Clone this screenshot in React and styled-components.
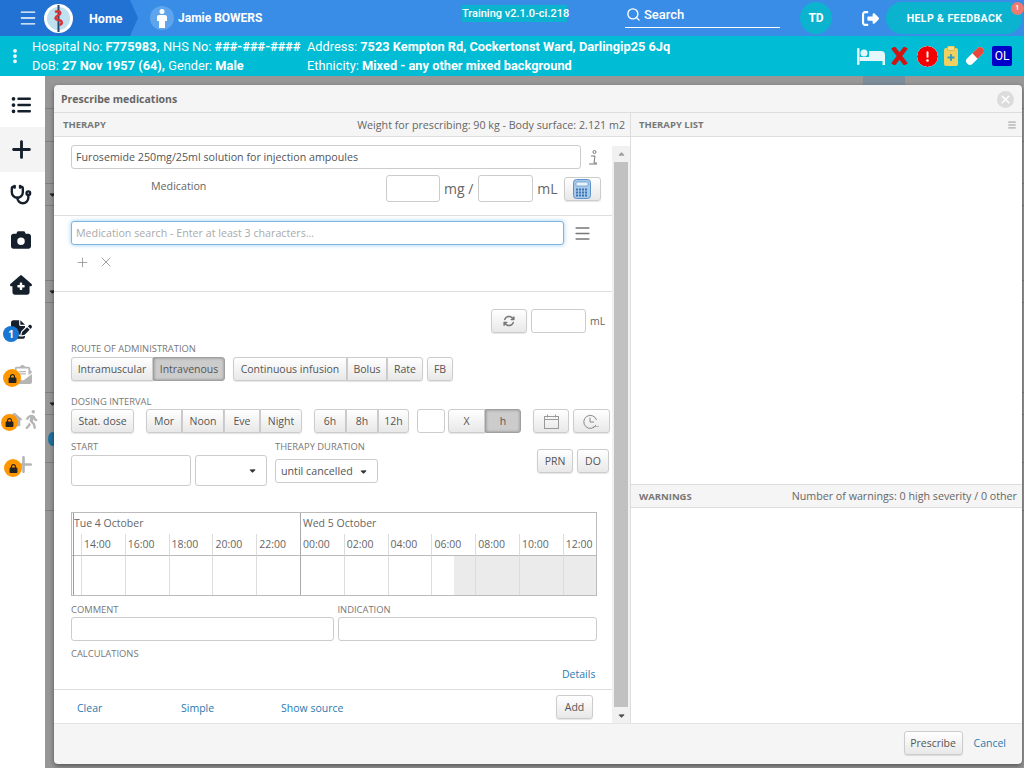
import React from 'react';
import styled, { createGlobalStyle } from 'styled-components';
import {
  FaListUl, FaPlus, FaCamera, FaHouseMedical, FaFileSignature, FaEnvelopeOpenText, FaLock, FaHouse, FaPersonWalking,
  FaCircleExclamation, FaArrowsRotate, FaRightFromBracket, FaCaretDown, FaCaretUp,
} from 'react-icons/fa6';
import { Stethoscope, Search, Menu, Plus, X, EllipsisVertical } from 'lucide-react';

const GlobalStyle = createGlobalStyle`
  html, body { margin: 0; height: 100%; overflow: hidden; }
  * { box-sizing: border-box; }
  body { font-family: "Open Sans", sans-serif; color: #555; }
`;

const Page = styled.div`
  position: relative;
  display: flex;
  flex-direction: column;
  width: 1024px;
  height: 768px;
  overflow: hidden;
`;

/* top bar */
const TopBar = styled.header`
  display: flex;
  align-items: center;
  height: 36px;
  background: #3a8de6;
  color: #fff;
  font-family: Roboto, sans-serif;
`;

const HomeCrumb = styled.div`
  display: flex;
  align-items: center;
  width: 138px;
  height: 36px;
  padding-left: 18px;
  background: #2272d3;
  clip-path: polygon(0 0, 130px 0, 138px 18px, 130px 36px, 0 36px);
`;

const MenuIcon = styled(Menu)`
  width: 20px;
  height: 20px;
  margin-right: 6px;
  stroke-width: 1.6;
`;

const Logo = styled.svg`
  width: 29px;
  height: 29px;
  flex: none;
`;

const CrumbText = styled.span`
  margin-left: 16px;
  font-size: 12.5px;
  font-weight: 700;
`;

const Avatar = styled.div`
  display: flex;
  align-items: center;
  justify-content: center;
  width: 24px;
  height: 24px;
  margin-left: 12px;
  border-radius: 50%;
  background: #5ea5ee;
`;

const PatientName = styled.span`
  margin-left: 4px;
  width: 284px;
  font-size: 12px;
  font-weight: 700;
`;

const TrainingBadge = styled.div`
  align-self: flex-start;
  width: 105px;
  height: 17px;
  margin-top: 5px;
  background: #0cb3cf;
  font-size: 11px;
  font-weight: 500;
  line-height: 17px;
  text-align: center;
  white-space: nowrap;
`;

const SearchBox = styled.div`
  align-self: flex-start;
  display: flex;
  align-items: center;
  gap: 3px;
  width: 155px;
  height: 24px;
  margin: 4px 0 0 58px;
  padding: 0 0 3px 1px;
  border-bottom: 1px solid #fff;
  font-size: 13px;
  font-weight: 500;
`;

const Initials = styled.div`
  display: flex;
  align-items: center;
  justify-content: center;
  width: 32px;
  height: 32px;
  margin-left: 20px;
  border-radius: 50%;
  background: #0cb3cf;
  font-size: 12px;
  font-weight: 700;
`;

const LogoutIcon = styled(FaRightFromBracket)`
  width: 19px;
  height: 17px;
  margin-left: 29px;
`;

const HelpButton = styled.div`
  position: relative;
  display: flex;
  align-items: center;
  justify-content: center;
  width: 136px;
  height: 32px;
  margin-left: 6px;
  padding-left: 1px;
  border-radius: 16px;
  background: #0cb3cf;
  font-size: 10.5px;
  font-weight: 700;
  letter-spacing: 0.4px;
`;

const HelpCount = styled.span`
  position: absolute;
  top: 0;
  right: -2px;
  width: 13px;
  height: 13px;
  border-radius: 50%;
  background: #ef7a72;
  font-size: 7px;
  line-height: 13px;
  text-align: center;
`;

/* patient banner */
const PatientBar = styled.div`
  display: flex;
  align-items: center;
  height: 40px;
  background: #00bcd4;
  color: #fff;
  font-family: Roboto, sans-serif;
`;

const MoreIcon = styled(EllipsisVertical)`
  width: 18px;
  height: 18px;
  margin: 0 8px 0 6px;
  stroke-width: 3;
`;

const PatientCol = styled.div`
  display: flex;
  flex-direction: column;
  width: ${({ $w }) => $w}px;
  font-size: 12.8px;
  line-height: 19px;
  white-space: nowrap;
  b { font-weight: 700; }
`;

const StatusIcons = styled.div`
  display: flex;
  align-items: center;
  gap: 6.4px;
  margin-left: auto;
  padding-right: 12px;
`;

const OlBadge = styled.div`
  width: 20px;
  height: 20px;
  margin-left: 1px;
  border-radius: 2px;
  background: #0000c8;
  font-size: 12px;
  line-height: 20px;
  text-align: center;
`;

const AlertIcon = styled(FaCircleExclamation)`
  width: 21px;
  height: 21px;
  margin-left: 2px;
  color: #f40000;
  background: #fff;
  border-radius: 50%;
`;

/* page under the dialog */
const Main = styled.div`
  display: flex;
  flex: 1;
  min-height: 0;
`;

const SideNav = styled.nav`
  display: flex;
  flex-direction: column;
  flex: none;
  width: 45px;
  padding-top: 6px;
  background: #fff;
`;

const NavItem = styled.div`
  position: relative;
  display: flex;
  align-items: center;
  justify-content: center;
  height: 45px;
  padding-right: 3px;
  background: ${({ $active }) => ($active ? '#f4f4f4' : 'transparent')};
  color: ${({ $locked }) => ($locked ? '#b5b5b5' : '#16202c')};
  font-size: 20px;
`;

const ShiftedIcon = styled.span`
  display: flex;
  align-items: center;
  margin-left: ${({ $ml }) => $ml}px;
`;

const NavBadge = styled.span`
  position: absolute;
  left: ${({ $left }) => $left}px;
  top: ${({ $top }) => $top}px;
  display: flex;
  align-items: center;
  justify-content: center;
  width: ${({ $size }) => $size}px;
  height: ${({ $size }) => $size}px;
  border-radius: 50%;
  background: ${({ $bg }) => $bg};
  color: ${({ $fg }) => $fg};
  font-size: 10px;
  font-weight: 700;
`;

const Backdrop = styled.div`
  display: flex;
  flex-direction: column;
  flex: 1;
  background: #979797;
`;

const BackRow = styled.div`
  display: flex;
  align-items: center;
  height: ${({ $h }) => $h}px;
  padding-left: 3px;
  border-bottom: 1px solid #7e7e7e;
  color: #222;
  font-size: 9px;
`;

const BackTab = styled.div`
  width: 42px;
  height: 9px;
  margin-left: 815px;
  align-self: flex-start;
  background: #7d8d99;
`;

const BackMark = styled.span`
  display: block;
  width: 9px;
  height: 14px;
  border-radius: 50%;
  background: #1f6f9e;
`;

/* dialog */
const Dialog = styled.section`
  position: absolute;
  left: 54px;
  top: 85px;
  display: flex;
  flex-direction: column;
  width: 968px;
  height: 679px;
  border-radius: 4px;
  background: #f5f5f5;
  box-shadow: 0 2px 5px rgba(0, 0, 0, 0.45);
`;

const DialogTitle = styled.div`
  display: flex;
  align-items: center;
  justify-content: space-between;
  flex: none;
  height: 27px;
  padding: 1px 8px 0 7px;
  font-size: 10.5px;
  font-weight: 700;
  color: #666;
`;

const CloseDot = styled.div`
  display: flex;
  align-items: center;
  justify-content: center;
  width: 17px;
  height: 17px;
  border-radius: 50%;
  background: #dcdcdc;
  color: #fff;
`;

const DialogBody = styled.div`
  display: flex;
  flex: none;
  height: 611px;
`;

const LeftPane = styled.div`
  display: flex;
  flex-direction: column;
  flex: none;
  width: 577px;
  border-right: 1px solid #ddd;
  background: #fff;
`;

const RightPane = styled.div`
  display: flex;
  flex-direction: column;
  flex: 1;
  background: #fff;
`;

const PaneHead = styled.div`
  display: flex;
  align-items: center;
  justify-content: space-between;
  flex: none;
  height: ${({ $h }) => $h || 25}px;
  padding: 0 5px 0 ${({ $pl }) => $pl || 9}px;
  border-top: 1px solid #ddd;
  border-bottom: 1px solid #ddd;
  background: #f5f5f5;
  font-size: 10.7px;
  color: #666;
  b { font-size: 9.5px; color: #777; }
`;

const PaneSpacer = styled.div`
  flex: ${({ $grow }) => ($grow ? 1 : 'none')};
  height: ${({ $h }) => ($h ? `${$h}px` : 'auto')};
`;

const PaneSplit = styled.div`
  display: flex;
  flex: 1;
  min-height: 0;
`;

const FormCol = styled.div`
  display: flex;
  flex-direction: column;
  width: 558px;
`;

const Scrollbar = styled.div`
  display: flex;
  flex-direction: column;
  align-items: center;
  width: 18px;
  margin-top: 9px;
  background: #f1f1f1;
  font-size: 9px;
`;

const ScrollEnd = styled.div`
  display: flex;
  align-items: center;
  justify-content: center;
  flex: none;
  height: 16px;
  color: ${({ $up }) => ($up ? '#a0a0a0' : '#505050')};
`;

const ScrollThumb = styled.div`
  flex: 1;
  width: 14px;
  background: #c1c1c1;
`;

const FormBlock = styled.div`
  display: flex;
  flex-direction: column;
  height: ${({ $h }) => $h}px;
  padding: ${({ $pt }) => $pt}px 0 0 17px;
  border-bottom: 1px solid #ddd;
`;

const Row = styled.div`
  display: flex;
  align-items: ${({ $align }) => $align || 'center'};
  gap: ${({ $gap }) => $gap || 0}px;
  margin-top: ${({ $mt }) => $mt || 0}px;
  padding-left: ${({ $pl }) => $pl || 0}px;
`;

const Label = styled.div`
  margin-top: ${({ $mt }) => $mt || 0}px;
  margin-left: ${({ $ml }) => $ml || 0}px;
  height: ${({ $h }) => $h || 14}px;
  font-size: 9.4px;
  line-height: ${({ $lh }) => $lh || 14}px;
  color: #777;
  white-space: nowrap;
`;

const TextBox = styled.div`
  flex: none;
  display: flex;
  align-items: center;
  width: ${({ $w }) => $w}px;
  height: ${({ $h }) => $h || 24}px;
  margin-left: ${({ $ml }) => $ml || 0}px;
  padding: 0 4px;
  border: 1px solid #ccc;
  border-radius: 3px;
  background: #fff;
  color: #555;
  font-size: 10.7px;
  white-space: nowrap;
  overflow: hidden;
`;

const FocusBox = styled(TextBox)`
  border-color: #7fb6df;
  box-shadow: 0 0 4px rgba(82, 168, 236, 0.6);
  color: #aaa;
`;

const SelectBox = styled(TextBox)`
  justify-content: space-between;
  padding: 0 9px 0 5px;
  color: #555;
`;

const Unit = styled.span`
  color: #666;
  font-size: ${({ $size }) => $size || 14}px;
  margin-left: ${({ $ml }) => $ml || 0}px;
  white-space: nowrap;
`;

const Btn = styled.div`
  flex: none;
  display: flex;
  align-items: center;
  justify-content: center;
  width: ${({ $w }) => $w}px;
  height: 24px;
  margin-left: ${({ $ml }) => $ml || 0}px;
  margin-top: ${({ $mt }) => $mt || 0}px;
  border: 1px solid ${({ $on }) => ($on ? '#a0a0a0' : '#ccc')};
  border-radius: 3px;
  background: ${({ $on }) => ($on ? '#ccc' : 'linear-gradient(#fff, #e8e8e8)')};
  box-shadow: ${({ $on }) => ($on ? 'inset 0 0 3px rgba(0, 0, 0, 0.35)' : '0 1px 1px rgba(0, 0, 0, 0.1)')};
  color: #555;
  font-size: 10.5px;
  white-space: nowrap;
`;

const BtnGroup = styled.div`
  display: flex;
  flex: none;
  margin-left: ${({ $ml }) => $ml || 0}px;
  ${Btn} { border-radius: 0; }
  ${Btn}:first-child { border-radius: 3px 0 0 3px; }
  ${Btn}:last-child { border-radius: 0 3px 3px 0; }
`;

const MedicationCaption = styled.span`
  width: 315px;
  padding: 0 0 6px 80px;
  font-size: 10.7px;
  color: #666;
`;

const InfoMark = styled.svg`
  width: 10px;
  height: 15px;
  margin-left: 7px;
`;

const SearchMenu = styled(Menu)`
  width: 19px;
  height: 19px;
  margin-left: 9px;
  color: #777;
  stroke-width: 2;
`;

const SmallIcons = styled.div`
  display: flex;
  align-items: center;
  gap: 8.5px;
  margin: 9px 0 0 3.5px;
  color: #888;
`;

/* timeline */
const Timeline = styled.div`
  position: relative;
  display: grid;
  grid-template-columns: 9px repeat(11, 43.8px) 1fr;
  grid-template-rows: 21px 22px 39px;
  width: 526px;
  height: 84px;
  border: 1px solid #bbb;
  font-size: 10.5px;
  color: #666;
`;

const NowLine = styled.span`
  position: absolute;
  left: 1px;
  top: 0;
  bottom: 0;
  width: 1px;
  background: #d9867c;
`;

const DayCell = styled.div`
  grid-column: ${({ $col }) => $col};
  padding: 3px 0 0 2px;
  border-left: ${({ $sep }) => ($sep ? '1px solid #aaa' : '0')};
  white-space: nowrap;
`;

const HourCell = styled.div`
  padding: 3px 0 0 2px;
  border-left: 1px solid ${({ $major }) => ($major ? '#aaa' : '#ddd')};
  border-bottom: 1px solid #bbb;
`;

const HourGap = styled.div`
  border-bottom: 1px solid #bbb;
`;

const SlotCell = styled.div`
  border-left: 1px solid ${({ $major }) => ($major ? '#aaa' : '#ddd')};
  background: ${({ $shade }) =>
    $shade === 'full' ? '#ebebeb' : $shade === 'half' ? 'linear-gradient(90deg, #fff 50%, #ebebeb 50%)' : '#fff'};
`;

const TextLink = styled.span`
  color: #2a7ab0;
  font-size: 10.5px;
  white-space: nowrap;
`;

const FormFooter = styled.div`
  display: flex;
  align-items: center;
  flex: none;
  height: 33px;
  padding: 1px 19px 0 23px;
`;

const FooterLink = styled(TextLink)`
  width: ${({ $w }) => $w}px;
  flex: none;
  padding-top: 2px;
`;

const DialogFooter = styled.div`
  display: flex;
  align-items: center;
  justify-content: flex-end;
  gap: 11px;
  flex: 1;
  padding: 0 16px 2px 0;
  border-top: 1px solid #e4e4e4;
`;

const hours = ['14:00', '16:00', '18:00', '20:00', '22:00', '00:00', '02:00', '04:00', '06:00', '08:00', '10:00', '12:00'];

const Calculator = () => (
  <svg width="18" height="20" viewBox="0 0 18 20">
    <rect x=".5" y=".5" width="17" height="19" rx="3" fill="#a9c9ea" stroke="#5c93cc" />
    <rect x="3" y="3" width="12" height="4" rx="1" fill="#e8f2fb" stroke="#5c93cc" strokeWidth=".7" />
    {[9.5, 12.5, 15.5].map(y =>
      [3, 6, 9, 12].map(x => <rect key={`${x}-${y}`} x={x} y={y} width="2" height="2" fill="#3a74b0" />)
    )}
  </svg>
);

const CalendarIcon = () => (
  <svg width="15" height="15" viewBox="0 0 15 15" fill="none" stroke="#999">
    <rect x=".5" y="2.500" width="14" height="12" />
    <path d="M.5 5.500h14M3.500 .5v3M11.500 .5v3" />
  </svg>
);

const ClockIcon = () => (
  <svg width="17" height="15" viewBox="0 0 17 15" fill="none" stroke="#888">
    <path d="M13 11A6.500 6.500 0 1 1 13.500 6" />
    <path d="M7 3.500V8h4" />
    <path d="M10.500 12.500h1M12.500 12.500h1M14.500 12.500h1" />
  </svg>
);

const BedGlyph = () => (
  <svg width="28" height="17" viewBox="0 0 28 17" fill="#e4f7fa">
    <rect x="0" y="0" width="2.500" height="17" rx="1" />
    <circle cx="7" cy="5" r="3.500" />
    <path d="M12 3h12a4 4 0 0 1 4 4v10h-2.500v-4h-23V9H12z" />
  </svg>
);

const BoldX = () => (
  <svg width="17" height="18" viewBox="0 0 17 18" stroke="#d01414" strokeWidth="4.500">
    <path d="M2 0.500L15 17.500M15 0.500L2 17.500" />
  </svg>
);

const Clipboard = () => (
  <svg width="14" height="20" viewBox="0 0 14 20">
    <rect x="0" y="2" width="14" height="18" rx="2" fill="#f0d060" />
    <rect x="3.500" y="0" width="7" height="4.500" rx="1" fill="#f6e08d" stroke="#c9a531" strokeWidth=".6" />
    <path d="M7 8v7M3.500 11.500h7" stroke="#2b9fc7" strokeWidth="1.800" />
  </svg>
);

const Pill = () => (
  <svg width="20" height="20" viewBox="0 0 21 21">
    <g transform="rotate(-45 10.500 10.500)">
      <rect x="-1" y="6.500" width="23" height="8" rx="4" fill="#fff" />
      <path d="M10.500 6.500h7.500a4 4 0 0 1 0 8h-7.500z" fill="#e8473c" />
    </g>
  </svg>
);

export default function App() {
  return (
    <Page>
      <GlobalStyle />
      <TopBar>
        <HomeCrumb>
          <MenuIcon />
          <Logo viewBox="0 0 29 29">
            <circle cx="14.500" cy="14.500" r="14.500" fill="#fff" />
            <circle cx="14.500" cy="14.500" r="11.500" fill="#bfe0ef" />
            <path d="M14.500 1v27" stroke="#29476f" strokeWidth="2" />
            <path d="M11 8c5-2 7 1 3.500 3S10 15 14.500 16s4 4 1 5" fill="none" stroke="#d8343a" strokeWidth="2.500" />
          </Logo>
          <CrumbText>Home</CrumbText>
        </HomeCrumb>
        <Avatar>
          <svg width="10" height="19" viewBox="0 0 10 19" fill="#fff">
            <circle cx="5" cy="2.500" r="2.500" />
            <path d="M2 6h6a2 2 0 0 1 2 2v4H8v7H2v-7H0V8a2 2 0 0 1 2-2z" />
          </svg>
        </Avatar>
        <PatientName>Jamie BOWERS</PatientName>
        <TrainingBadge>Training v2.1.0-ci.218</TrainingBadge>
        <SearchBox>
          <Search size={15} strokeWidth={2.2} />
          Search
        </SearchBox>
        <Initials>TD</Initials>
        <LogoutIcon />
        <HelpButton>
          HELP &amp; FEEDBACK
          <HelpCount>1</HelpCount>
        </HelpButton>
      </TopBar>

      <PatientBar>
        <MoreIcon />
        <PatientCol $w={275}>
          <span>Hospital No: <b>F775983,</b> NHS No: <b>###-###-####</b></span>
          <span>DoB: <b>27 Nov 1957 (64),</b> Gender: <b>Male</b></span>
        </PatientCol>
        <PatientCol $w={400}>
          <span>Address: <b>7523 Kempton Rd, Cockertonst Ward, Darlingip25 6Jq</b></span>
          <span>Ethnicity: <b>Mixed - any other mixed background</b></span>
        </PatientCol>
        <StatusIcons>
          <BedGlyph />
          <BoldX />
          <AlertIcon />
          <Clipboard />
          <Pill />
          <OlBadge>OL</OlBadge>
        </StatusIcons>
      </PatientBar>

      <Main>
        <SideNav>
          <NavItem><FaListUl /></NavItem>
          <NavItem $active><FaPlus size={23} /></NavItem>
          <NavItem><Stethoscope size={22} strokeWidth={2.6} /></NavItem>
          <NavItem><FaCamera /></NavItem>
          <NavItem><FaHouseMedical size={22} /></NavItem>
          <NavItem>
            <FaFileSignature size={21} />
            <NavBadge $left={3} $top={19} $size={16} $bg="#1976d2" $fg="#fff">1</NavBadge>
          </NavItem>
          <NavItem $locked>
            <ShiftedIcon $ml={3}><FaEnvelopeOpenText size={19} /></ShiftedIcon>
            <NavBadge $left={3} $top={17} $size={18} $bg="#ff9800" $fg="#222"><FaLock size={9} /></NavBadge>
          </NavItem>
          <NavItem $locked>
            <ShiftedIcon $ml={6}><FaHouse size={15} /></ShiftedIcon>
            <FaPersonWalking size={19} />
            <NavBadge $left={1} $top={17} $size={17} $bg="#ff9800" $fg="#222"><FaLock size={9} /></NavBadge>
          </NavItem>
          <NavItem $locked>
            <ShiftedIcon $ml={5}><FaPlus size={21} /></ShiftedIcon>
            <NavBadge $left={4} $top={17} $size={18} $bg="#ff9800" $fg="#222"><FaLock size={9} /></NavBadge>
          </NavItem>
        </SideNav>
        <Backdrop>
          <BackRow $h={33}><BackTab /></BackRow>
          <BackRow $h={33} />
          <BackRow $h={42} />
          <BackRow $h={22}><FaCaretDown /></BackRow>
          <BackRow $h={75} />
          <BackRow $h={22}><FaCaretDown /></BackRow>
          <BackRow $h={90} />
          <BackRow $h={22}><FaCaretDown /></BackRow>
          <BackRow $h={48}><BackMark /></BackRow>
          <BackRow $h={48} />
        </Backdrop>
      </Main>

      <Dialog>
        <DialogTitle>
          Prescribe medications
          <CloseDot><X size={13} strokeWidth={3} /></CloseDot>
        </DialogTitle>
        <DialogBody>
          <LeftPane>
            <PaneHead>
              <b>THERAPY</b>
              <span>Weight for prescribing: 90 kg - Body surface: 2.121 m2</span>
            </PaneHead>
            <PaneSplit>
              <FormCol>
                <FormBlock $h={79} $pt={8}>
                  <Row>
                    <TextBox $w={510}>Furosemide 250mg/25ml solution for injection ampoules</TextBox>
                    <InfoMark viewBox="0 0 10 15" fill="none" stroke="#777">
                      <circle cx="6.500" cy="2" r="1.500" />
                      <path d="M3 6h4l-1 7h3M1 14h8" />
                    </InfoMark>
                  </Row>
                  <Row $mt={6}>
                    <MedicationCaption>Medication</MedicationCaption>
                    <TextBox $w={54} $h={27} />
                    <Unit $ml={4}>mg /</Unit>
                    <TextBox $w={55} $h={27} $ml={5} />
                    <Unit $ml={4}>mL</Unit>
                    <Btn $w={37} $ml={6}><Calculator /></Btn>
                  </Row>
                </FormBlock>
                <FormBlock $h={76} $pt={5}>
                  <Row>
                    <FocusBox $w={493}>Medication search - Enter at least 3 characters...</FocusBox>
                    <SearchMenu />
                  </Row>
                  <SmallIcons>
                    <Plus size={15} strokeWidth={1.2} />
                    <X size={16} strokeWidth={1.2} />
                  </SmallIcons>
                </FormBlock>
                <FormBlock $h={398} $pt={17}>
                  <Row $pl={420}>
                    <Btn $w={36}><FaArrowsRotate size={12} color="#777" /></Btn>
                    <TextBox $w={55} $ml={4} />
                    <Unit $size={10.5} $ml={4}>mL</Unit>
                  </Row>
                  <Label $mt={9} $h={15}>ROUTE OF ADMINISTRATION</Label>
                  <Row>
                    <BtnGroup>
                      <Btn $w={82}>Intramuscular</Btn>
                      <Btn $w={72} $on>Intravenous</Btn>
                    </BtnGroup>
                    <BtnGroup $ml={8}>
                      <Btn $w={114}>Continuous infusion</Btn>
                      <Btn $w={40}>Bolus</Btn>
                      <Btn $w={36}>Rate</Btn>
                    </BtnGroup>
                    <Btn $w={26} $ml={4}>FB</Btn>
                  </Row>
                  <Label $mt={14}>DOSING INTERVAL</Label>
                  <Row>
                    <Btn $w={63}>Stat. dose</Btn>
                    <BtnGroup $ml={12}>
                      <Btn $w={36}>Mor</Btn>
                      <Btn $w={42}>Noon</Btn>
                      <Btn $w={36}>Eve</Btn>
                      <Btn $w={42}>Night</Btn>
                    </BtnGroup>
                    <BtnGroup $ml={12}>
                      <Btn $w={32}>6h</Btn>
                      <Btn $w={32}>8h</Btn>
                      <Btn $w={31}>12h</Btn>
                    </BtnGroup>
                    <TextBox $w={28} $ml={8} />
                    <BtnGroup $ml={3}>
                      <Btn $w={37}>X</Btn>
                      <Btn $w={36} $on>h</Btn>
                    </BtnGroup>
                    <Btn $w={36} $ml={12}><CalendarIcon /></Btn>
                    <Btn $w={37} $ml={4}><ClockIcon /></Btn>
                  </Row>
                  <Row $align="flex-start" $mt={10}>
                    <div>
                      <Label $h={12} $lh={8}>START</Label>
                      <Row $gap={4}>
                        <TextBox $w={120} $h={31} />
                        <SelectBox $w={72} $h={31}><span /><FaCaretDown size={9} color="#333" /></SelectBox>
                      </Row>
                    </div>
                    <div>
                      <Label $h={16} $lh={8} $ml={8}>THERAPY DURATION</Label>
                      <SelectBox $w={103} $ml={8}>until cancelled<FaCaretDown size={9} color="#333" /></SelectBox>
                    </div>
                    <Btn $w={36} $ml={159} $mt={6}>PRN</Btn>
                    <Btn $w={32} $ml={4} $mt={6}>DO</Btn>
                  </Row>
                  <Row $mt={26}>
                    <Timeline>
                      <NowLine />
                      <DayCell $col="1 / 7">Tue 4 October</DayCell>
                      <DayCell $col="7 / 14" $sep>Wed 5 October</DayCell>
                      <HourGap />
                      {hours.map((h, i) => <HourCell key={h} $major={i === 5}>{h}</HourCell>)}
                      <div />
                      {hours.map((h, i) => (
                        <SlotCell key={h} $major={i === 5} $shade={i === 8 ? 'half' : i > 8 ? 'full' : undefined} />
                      ))}
                    </Timeline>
                  </Row>
                  <Row $mt={7}>
                    <Label>COMMENT</Label>
                    <Label $ml={219}>INDICATION</Label>
                  </Row>
                  <Row $gap={4}>
                    <TextBox $w={263} />
                    <TextBox $w={259} />
                  </Row>
                  <Label $mt={6}>CALCULATIONS</Label>
                  <Row $mt={6} $pl={491}><TextLink>Details</TextLink></Row>
                </FormBlock>
                <FormFooter>
                  <FooterLink $w={104}>Clear</FooterLink>
                  <FooterLink $w={100}>Simple</FooterLink>
                  <FooterLink $w={275}>Show source</FooterLink>
                  <Btn $w={37}>Add</Btn>
                </FormFooter>
              </FormCol>
              <Scrollbar>
                <ScrollEnd $up><FaCaretUp /></ScrollEnd>
                <ScrollThumb />
                <ScrollEnd><FaCaretDown /></ScrollEnd>
              </Scrollbar>
            </PaneSplit>
          </LeftPane>
          <RightPane>
            <PaneHead $pl={8}>
              <b>THERAPY LIST</b>
              <Menu size={10} color="#888" />
            </PaneHead>
            <PaneSpacer $h={347} />
            <PaneHead $h={24} $pl={8}>
              <b>WARNINGS</b>
              <span>Number of warnings: 0 high severity / 0 other</span>
            </PaneHead>
            <PaneSpacer $grow />
          </RightPane>
        </DialogBody>
        <DialogFooter>
          <Btn $w={59}>Prescribe</Btn>
          <TextLink>Cancel</TextLink>
        </DialogFooter>
      </Dialog>
    </Page>
  );
}
